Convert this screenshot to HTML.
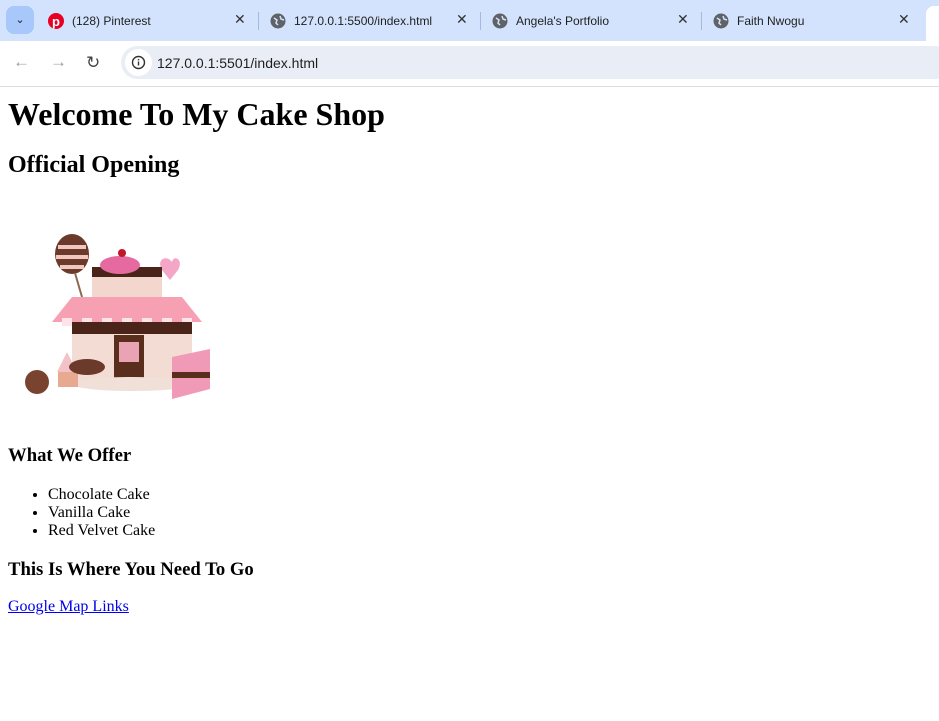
<!DOCTYPE html>
<html><head><meta charset="utf-8"><style>
*{box-sizing:border-box}
body{margin:0;width:939px;height:721px;overflow:hidden;background:#fff;font-family:"Liberation Serif",serif}
.tabs{position:absolute;top:0;left:0;width:939px;height:41px;background:#d3e3fd}
.ui{font-family:"Liberation Sans",sans-serif;font-size:12px;color:#1f1f1f}
.tab{position:absolute;top:0;height:41px;display:flex;align-items:center}
.x{position:absolute;font-size:14px;color:#333}
.sep{position:absolute;top:12px;width:1px;height:18px;background:#a8b8d8}
.bar{position:absolute;top:41px;left:0;width:939px;height:46px;background:#fff;border-bottom:1px solid #dadce0}
.omni{position:absolute;left:121px;top:5px;width:830px;height:33px;background:#e9eef6;border-radius:17px}
.content{position:absolute;top:87px;left:8px;width:900px;height:620px}
h1{font-size:32px;margin:0;position:absolute;top:9px;white-space:nowrap}
h2{font-size:24px;margin:0;position:absolute;top:65px;white-space:nowrap}
h3{font-size:18.7px;margin:0;position:absolute;white-space:nowrap}
ul{position:absolute;top:399px;left:0;margin:0;padding-left:40px;font-size:16px;line-height:18px;white-space:nowrap;width:400px}
a{position:absolute;top:511px;font-size:16px;color:#0000ee;white-space:nowrap}
</style></head><body>
<div class="tabs ui">
 <div style="position:absolute;left:6px;top:6px;width:28px;height:28px;border-radius:8px;background:#a8c7fa;text-align:center;line-height:28px;font-size:11px">&#8964;</div>
 <div class="tab" style="left:48px"><svg width="16" height="16"><circle cx="8" cy="8" r="8" fill="#e60023"/><text x="8" y="13" font-size="13" font-weight="bold" fill="#fff" text-anchor="middle" font-family="Liberation Sans">p</text></svg><span style="margin-left:8px">(128) Pinterest</span></div>
 <div class="x" style="left:234px;top:11px">✕</div>
 <div class="sep" style="left:258px"></div>
 <div class="tab" style="left:270px"><svg width="16" height="16"><circle cx="8" cy="8" r="7.5" fill="#5f6368"/><path d="M4 5l3 2-1 3 2 2M10 3l1 3 3 1" stroke="#d3e3fd" stroke-width="1.5" fill="none"/></svg><span style="margin-left:8px">127.0.0.1:5500/index.html</span></div>
 <div class="x" style="left:456px;top:11px">✕</div>
 <div class="sep" style="left:480px"></div>
 <div class="tab" style="left:492px"><svg width="16" height="16"><circle cx="8" cy="8" r="7.5" fill="#5f6368"/><path d="M4 5l3 2-1 3 2 2M10 3l1 3 3 1" stroke="#d3e3fd" stroke-width="1.5" fill="none"/></svg><span style="margin-left:8px">Angela's Portfolio</span></div>
 <div class="x" style="left:677px;top:11px">✕</div>
 <div class="sep" style="left:701px"></div>
 <div class="tab" style="left:713px"><svg width="16" height="16"><circle cx="8" cy="8" r="7.5" fill="#5f6368"/><path d="M4 5l3 2-1 3 2 2M10 3l1 3 3 1" stroke="#d3e3fd" stroke-width="1.5" fill="none"/></svg><span style="margin-left:8px">Faith Nwogu</span></div>
 <div class="x" style="left:898px;top:11px">✕</div>
 <div style="position:absolute;left:926px;top:6px;width:20px;height:35px;background:#fff;border-radius:8px 8px 0 0"></div>
</div>
<div class="bar ui">
 <div style="position:absolute;left:13px;top:11px;font-size:17px;color:#9aa0a6">←</div>
 <div style="position:absolute;left:50px;top:11px;font-size:17px;color:#9aa0a6">→</div>
 <div style="position:absolute;left:86px;top:12px;font-size:17px;color:#444">↻</div>
 <div class="omni"><div style="position:absolute;left:4px;top:3px;width:27px;height:27px;border-radius:50%;background:#fff"></div>
 <svg style="position:absolute;left:10px;top:9px" width="15" height="15"><circle cx="7.5" cy="7.5" r="6" stroke="#333" stroke-width="1.4" fill="none"/><rect x="6.8" y="6.5" width="1.4" height="4" fill="#333"/><rect x="6.8" y="4" width="1.4" height="1.4" fill="#333"/></svg>
 <span style="position:absolute;left:36px;top:9px;font-size:14px">127.0.0.1:5501/index.html</span></div>
</div>
<div class="content">
 <h1>Welcome To My Cake Shop</h1>
 <h2>Official Opening</h2>
 <svg style="position:absolute;left:14px;top:140px" width="200" height="185">
  <ellipse cx="50" cy="27" rx="17" ry="20" fill="#6b3a2a"/>
  <path d="M36 20h28M34 30h32M38 40h24" stroke="#f0c8c0" stroke-width="4"/>
  <line x1="53" y1="46" x2="60" y2="70" stroke="#8a6a50" stroke-width="2"/>
  <path d="M150 35c-6-8-16-2-10 8l8 10 8-10c6-10-4-16-6-8z" fill="#f4a6c6"/>
  <rect x="70" y="40" width="70" height="32" fill="#f3d7cf"/>
  <rect x="70" y="40" width="70" height="10" fill="#4a2418"/>
  <ellipse cx="98" cy="38" rx="20" ry="9" fill="#e56aa0"/>
  <circle cx="100" cy="26" r="4" fill="#c0182a"/>
  <path d="M30 95l20-25h110l20 25z" fill="#f7a0b4"/>
  <path d="M40 95h10M60 95h10M80 95h10M100 95h10M120 95h10M140 95h10M160 95h10" stroke="#fde4ea" stroke-width="8"/>
  <rect x="50" y="95" width="120" height="60" fill="#f3dcd4"/>
  <rect x="50" y="95" width="120" height="12" fill="#4a2418"/>
  <rect x="92" y="108" width="30" height="45" fill="#5a2e1c"/>
  <rect x="97" y="115" width="20" height="20" fill="#e9a3b4"/>
  <ellipse cx="110" cy="157" rx="60" ry="7" fill="#f0e0d8"/>
  <path d="M150 130l38 -8 0 40-38 10z" fill="#f09ab8"/>
  <rect x="150" y="145" width="38" height="6" fill="#5a2e1c"/>
  <circle cx="15" cy="155" r="12" fill="#7a4330"/>
  <path d="M35 145l10-20 10 20z" fill="#f3c1c8"/>
  <rect x="36" y="145" width="20" height="15" fill="#e7a98f"/>
  <ellipse cx="65" cy="140" rx="18" ry="8" fill="#6b3a2a"/>
 </svg>
 <h3 style="top:358px">What We Offer</h3>
 <ul><li>Chocolate Cake</li><li>Vanilla Cake</li><li>Red Velvet Cake</li></ul>
 <h3 style="top:472px">This Is Where You Need To Go</h3>
 <a href="#">Google Map Links</a>
</div>
</body></html>
